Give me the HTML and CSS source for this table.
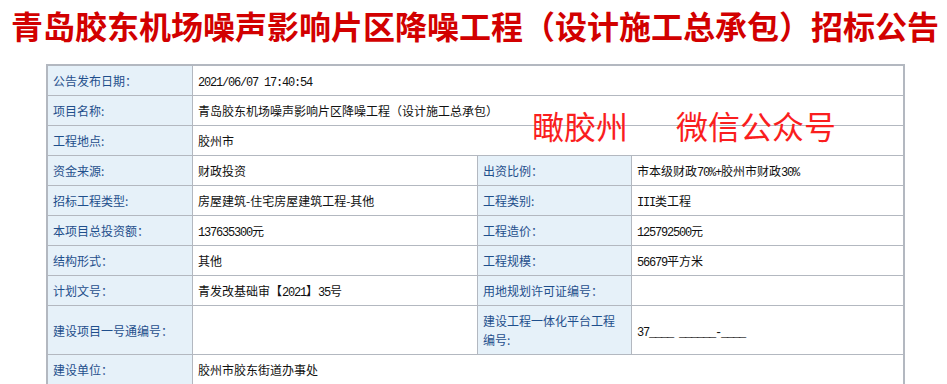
FILE: index.html
```html
<!DOCTYPE html>
<html lang="zh-CN">
<head>
<meta charset="utf-8">
<title>招标公告</title>
<link rel="stylesheet" href="styles.css">
</head>
<body>
<div class="page">
  <h1 class="title">青岛胶东机场噪声影响片区降噪工程（设计施工总承包）招标公告</h1>
  <div class="sheet">
    <table class="info">
      <colgroup>
        <col class="c1"><col class="c2"><col class="c3"><col class="c4">
      </colgroup>
      <tr>
        <td class="lbl">公告发布日期：</td>
        <td class="val" colspan="3"><span class="en">2021/06/07 17:40:54</span></td>
      </tr>
      <tr>
        <td class="lbl">项目名称:</td>
        <td class="val" colspan="3">青岛胶东机场噪声影响片区降噪工程（设计施工总承包）</td>
      </tr>
      <tr>
        <td class="lbl">工程地点:</td>
        <td class="val" colspan="3">胶州市</td>
      </tr>
      <tr>
        <td class="lbl">资金来源:</td>
        <td class="val">财政投资</td>
        <td class="lbl">出资比例：</td>
        <td class="val">市本级财政<span class="en">70%+</span>胶州市财政<span class="en">30%</span></td>
      </tr>
      <tr>
        <td class="lbl">招标工程类型:</td>
        <td class="val">房屋建筑-住宅房屋建筑工程-其他</td>
        <td class="lbl">工程类别:</td>
        <td class="val"><span class="en">III</span>类工程</td>
      </tr>
      <tr>
        <td class="lbl">本项目总投资额：</td>
        <td class="val"><span class="en">137635300</span>元</td>
        <td class="lbl">工程造价：</td>
        <td class="val"><span class="en">125792500</span>元</td>
      </tr>
      <tr>
        <td class="lbl">结构形式：</td>
        <td class="val">其他</td>
        <td class="lbl">工程规模：</td>
        <td class="val"><span class="en">56679</span>平方米</td>
      </tr>
      <tr>
        <td class="lbl">计划文号：</td>
        <td class="val">青发改基础审【<span class="en">2021</span>】<span class="en">35</span>号</td>
        <td class="lbl">用地规划许可证编号：</td>
        <td class="val"></td>
      </tr>
      <tr>
        <td class="lbl">建设项目一号通编号：</td>
        <td class="val"></td>
        <td class="lbl">建设工程一体化平台工程编号:</td>
        <td class="val"><span class="en">37____ ______-____</span></td>
      </tr>
      <tr>
        <td class="lbl">建设单位：</td>
        <td class="val" colspan="3">胶州市胶东街道办事处</td>
      </tr>
    </table>
    <div class="mark"><span>瞰胶州</span><span>微信公众号</span></div>
  </div>
</div>
</body>
</html>
```

FILE: styles.css
```css
html, body {
  margin: 0;
  padding: 0;
  background: #ffffff;
}

.page {
  width: 947px;
}

.title {
  margin: 0;
  height: 64px;
  padding: 5px 0 0 3px;
  box-sizing: border-box;
  text-align: center;
  font-family: "Noto Sans CJK SC", sans-serif;
  font-weight: 700;
  font-size: 32px;
  line-height: 40px;
  color: #d20000;
  white-space: nowrap;
}

.sheet {
  position: relative;
  padding-left: 46px;
}

.info {
  width: 859px;
  table-layout: fixed;
  border-collapse: separate;
  border-spacing: 0;
  border: 2px solid #b3b8c0;
  font-family: "Noto Sans CJK SC", sans-serif;
  font-size: 12px;
}

.c1 { width: 145px; }
.c2 { width: 285px; }
.c3 { width: 154px; }
.c4 { width: 271px; }

.info td {
  padding: 5px 5px;
  height: 19px;
  line-height: 19px;
  border-right: 1px solid #b3b8c0;
  border-bottom: 1px solid #b3b8c0;
  vertical-align: middle;
  overflow: hidden;
}

.info td:last-child {
  border-right: 0;
}

.lbl {
  background: #e6f1f9;
  color: #1f4f8c;
}

.val {
  background: #ffffff;
  color: #111111;
}

.en {
  font-family: "Liberation Mono", monospace;
  font-size: 12px;
  line-height: 12px;
  letter-spacing: -1.2px;
}

.mark {
  position: absolute;
  left: 532px;
  top: 45px;
  display: flex;
  gap: 48px;
  font-family: "Noto Sans CJK SC", sans-serif;
  font-size: 32px;
  line-height: 32px;
  color: #fa1e1e;
  white-space: nowrap;
  pointer-events: none;
}
```
